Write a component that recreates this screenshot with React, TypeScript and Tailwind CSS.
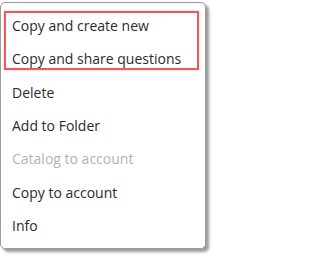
const items: { label: string; disabled?: boolean }[] = [
  { label: "Copy and create new" },
  { label: "Copy and share questions" },
  { label: "Delete" },
  { label: "Add to Folder" },
  { label: "Catalog to account", disabled: true },
  { label: "Copy to account" },
  { label: "Info" },
];

export default function App() {
  return (
    <div className="w-[215px] h-[256px] bg-white pt-[2px] font-['Open_Sans',sans-serif]">
      <div className="relative w-[206px] rounded-[5px] border border-[#9c9c9c] bg-white py-[6px] shadow-[3px_3px_3px_rgba(0,0,0,0.4)]">
        {items.map((item) => (
          <div
            key={item.label}
            className={
              item.disabled
                ? "h-[33.3px] flex items-center pl-[11px] text-[14px] text-[#b3b3b3]"
                : "h-[33.3px] flex items-center pl-[11px] text-[14px] text-[#2b2b2b]"
            }
          >
            {item.label}
          </div>
        ))}
        <div className="absolute left-[3px] top-[8px] w-[195px] h-[59px] border-2 border-[#e85c5c] shadow-[0_0_2px_rgba(232,92,92,0.4)]" />
      </div>
    </div>
  );
}
